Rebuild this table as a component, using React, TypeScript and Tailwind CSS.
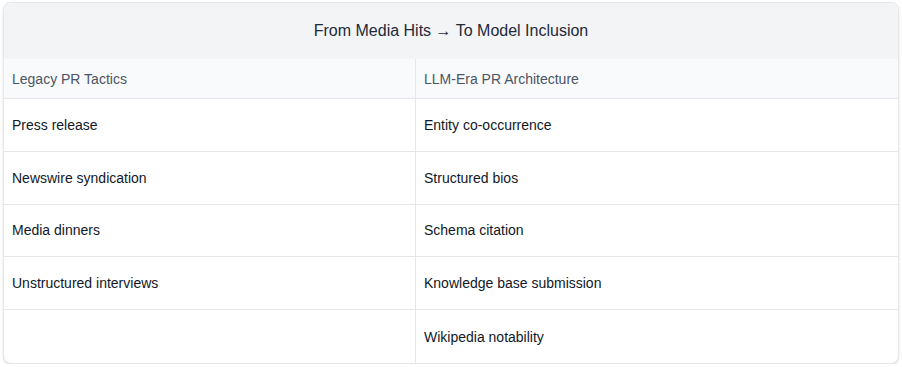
const rows: [string, string][] = [
  ["Press release", "Entity co-occurrence"],
  ["Newswire syndication", "Structured bios"],
  ["Media dinners", "Schema citation"],
  ["Unstructured interviews", "Knowledge base submission"],
  ["", "Wikipedia notability"],
];

export default function App() {
  return (
    <div
      className="px-[3px] pt-[2px] bg-white"
      style={{ fontFamily: '"Liberation Sans", Arial, sans-serif' }}
    >
      <div className="rounded-lg border border-gray-200 shadow-sm overflow-hidden bg-white">
        {/* table caption */}
        <div className="h-[56px] flex items-center justify-center bg-gray-100 text-base text-gray-800">
          From Media Hits → To Model Inclusion
        </div>

        {/* column headings */}
        <div className="grid grid-cols-[412px_1fr] h-[40px] bg-gray-50 border-b border-gray-200 text-sm text-gray-600">
          <div className="flex items-center px-2 border-r border-gray-200">Legacy PR Tactics</div>
          <div className="flex items-center px-2">LLM-Era PR Architecture</div>
        </div>

        {rows.map(([legacy, modern], i) => (
          <div
            key={i}
            className={`grid grid-cols-[412px_1fr] h-[52.8px] text-sm text-gray-900 ${
              i < rows.length - 1 ? "border-b border-gray-200" : ""
            }`}
          >
            <div className="flex items-center px-2 border-r border-gray-200">{legacy}</div>
            <div className="flex items-center px-2">{modern}</div>
          </div>
        ))}
      </div>
    </div>
  );
}
